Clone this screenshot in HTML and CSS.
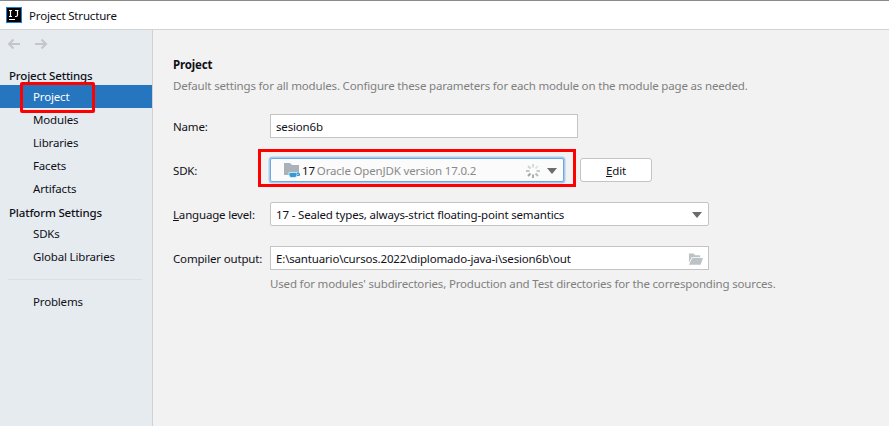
FILE: index.html
```html
<!DOCTYPE html>
<html lang="en">
<head>
<meta charset="utf-8">
<title>Project Structure</title>
<link rel="stylesheet" href="styles.css">
</head>
<body>
<div class="window">
  <header class="titlebar">
    <svg class="app-icon" width="16" height="16" viewBox="0 0 16 16"><rect x="0.5" y="0.5" width="15" height="15" fill="#000" stroke="#1f7fd0"/><rect x="3" y="12" width="6" height="1" fill="#fff"/><path d="M3 3.500h3M4.500 3.500v6M3 9.500h3M9 3.500h3.500M11.500 3.500v4.500q0 1.500-1.500 1.500H9" stroke="#fff" stroke-width="1.200" fill="none"/></svg>
    <span>Project Structure</span>
  </header>
  <div class="main">
    <nav class="sidebar">
      <div class="arrows">
        <svg width="16" height="12" viewBox="0 0 16 12"><path d="M14 6H3M7.500 1.500 3 6l4.500 4.500" stroke="#c4c6c8" stroke-width="2" fill="none"/></svg>
        <svg width="16" height="12" viewBox="0 0 16 12"><path d="M2 6h11M8.500 1.500 13 6l-4.500 4.500" stroke="#c4c6c8" stroke-width="2" fill="none"/></svg>
      </div>
      <div class="heading first">Project Settings</div>
      <a class="item active">Project</a>
      <a class="item">Modules</a>
      <a class="item">Libraries</a>
      <a class="item">Facets</a>
      <a class="item">Artifacts</a>
      <div class="heading">Platform Settings</div>
      <a class="item">SDKs</a>
      <a class="item">Global Libraries</a>
      <div class="divider"></div>
      <a class="item">Problems</a>
    </nav>
    <section class="content">
      <h1>Project</h1>
      <p class="muted desc">Default settings for all modules. Configure these parameters for each module on the module page as needed.</p>
      <div class="form">
        <label>Name:</label>
        <div class="field name">sesion6b</div>
        <label>SDK:</label>
        <div class="sdk-row">
          <div class="field sdk">
            <svg class="sdk-icon" width="16" height="15" viewBox="0 0 16 15"><path d="M0 0h6l2 2h7v10H0z" fill="#a9b2b8"/><path d="M5 9.500h8v2.500q0 2.500-2.500 2.500h-3Q5 14.500 5 12z" fill="#2d9cdb" stroke="#fbfbfb" stroke-width=".7"/><path d="M13 10.500h2.500v2H13" fill="none" stroke="#2d9cdb"/></svg>
            <span class="sdk-ver">17</span><span class="sdk-name">Oracle OpenJDK version 17.0.2</span>
            <svg class="spinner" width="16" height="16" viewBox="0 0 16 16" stroke-width="2" fill="none"><path d="M8 1v3.500" stroke="#d8dadb"/><path d="m13 3-2.500 2.500" stroke="#e0e2e3"/><path d="M15 8h-3.500" stroke="#c8cbcd"/><path d="m13 13-2.500-2.500" stroke="#b5b9bc"/><path d="M8 15v-3.500" stroke="#a8adb0"/><path d="m3 13 2.500-2.500" stroke="#9ea3a7"/><path d="M1 8h3.500" stroke="#c0c4c6"/><path d="m3 3 2.500 2.500" stroke="#cfd2d4"/></svg>
            <span class="caret"></span>
          </div>
          <button class="btn" type="button"><u>E</u>dit</button>
        </div>
        <label><u>L</u>anguage level:</label>
        <div class="field wide combo">17 - Sealed types, always-strict floating-point semantics<span class="caret"></span></div>
        <label>Compiler output:</label>
        <div class="field wide path">E:\santuario\cursos.2022\diplomado-java-i\sesion6b\out
          <svg width="15" height="14" viewBox="0 0 16 14"><path d="M1 1h5l1.500 2H13v2H4L1 11z" fill="#bcc3c7"/><path d="M4.500 6H16l-2.500 7H1z" fill="#bcc3c7"/></svg>
        </div>
        <span></span>
        <p class="muted hint">Used for modules' subdirectories, Production and Test directories for the corresponding sources.</p>
      </div>
    </section>
  </div>
  <div class="mark mark-project"></div>
  <div class="mark mark-sdk"></div>
</div>
</body>
</html>
```

FILE: styles.css
```css
* { box-sizing: border-box; }
html, body { margin: 0; height: 100%; overflow: hidden; }
body {
  font-family: "Noto Sans", "Open Sans", sans-serif;
  font-size: 11.5px;
  letter-spacing: -0.17px;
  color: #101018;
  background: #f2f2f2;
}
.window { position: relative; height: 426px; display: flex; flex-direction: column; }
.titlebar {
  height: 30px;
  flex: none;
  display: flex;
  align-items: center;
  gap: 7px;
  padding: 0 0 0 6px;
  background: #fff;
  border-top: 1px solid #8a8a8a;
  border-bottom: 1px solid #d4d4d4;
}
.main { flex: 1; display: flex; min-height: 0; }
.sidebar {
  width: 153px;
  flex: none;
  background: #e6ebf0;
  border-right: 1px solid #d1d1d1;
}
.arrows { display: flex; gap: 11px; height: 30px; padding: 8px 0 0 6px; }
.arrows svg { display: block; }
.heading { padding: 4px 0 0 9px; height: 22px; line-height: 18px; font-weight: 500; }
.heading.first { margin-top: 7px; padding-top: 0; height: 18px; }
.item { display: block; padding-left: 33px; height: 23px; line-height: 23px; }
.item.active { background: #2675bf; color: #fff; }
.divider { height: 1px; margin: 11px 10px 10px 8px; background: #dcdfe2; }
.content { flex: 1; padding: 26px 0 0 20px; }
h1 { margin: 0; font-size: 11.5px; font-weight: 700; line-height: 18px; }
.muted { color: #7f7f7f; margin: 0; }
.desc { margin-top: 3px; line-height: 18px; }
.form {
  display: grid;
  grid-template-columns: 97px 1fr;
  grid-template-rows: 24px 24px 24px 24px auto;
  row-gap: 20px;
  margin-top: 19px;
  align-items: center;
}
label { line-height: 20px; padding-top: 2px; }
.field {
  height: 24px;
  background: #fff;
  border: 1px solid #c4c4c4;
  line-height: 24px;
  padding: 1px 4px 0 5px;
  display: flex;
  align-items: center;
  white-space: nowrap;
}
.name { width: 308px; }
.sdk-row { display: flex; gap: 16px; align-items: center; }
.sdk {
  width: 294px;
  border: 1px solid #6fa7e0;
  border-radius: 2px;
  box-shadow: 0 0 0 1.500px #a9ccee;
  padding-left: 13px;
  background: #fbfbfb;
}
.sdk-icon { margin-right: 2px; flex: none; }
.sdk-ver { margin-right: 2px; }
.sdk-name { color: #8a8a8a; }
.spinner { margin-left: auto; margin-right: 6px; flex: none; }
.caret { width: 0; height: 0; border: 5px solid transparent; border-top: 6px solid #6b6b6b; border-bottom: 0; margin-right: 2px; flex: none; }
.btn {
  width: 72px;
  height: 24px;
  background: #fff;
  border: 1px solid #c4c4c4;
  border-radius: 3px;
  font: inherit;
  letter-spacing: inherit;
  color: inherit;
  padding: 0;
}
.wide { width: 439px; }
.combo { justify-content: space-between; border-radius: 2px; }
.combo .caret { margin-right: 2px; }
.path { justify-content: space-between; }
.path svg { flex: none; margin-right: 1px; }
.hint { margin-top: -15px; line-height: 18px; }
.mark { position: absolute; border: 3px solid #f00; pointer-events: none; }
.mark-project { left: 20px; top: 82px; width: 75px; height: 31px; border-radius: 2px; }
.mark-sdk { left: 258px; top: 149px; width: 318px; height: 38px; }
```
